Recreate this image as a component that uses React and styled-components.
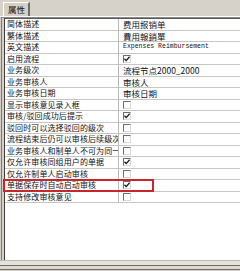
import React from "react";
import styled, { createGlobalStyle } from "styled-components";

const rows = [
  { label: "简体描述", value: "费用报销单" },
  { label: "繁体描述", value: "費用報銷單" },
  { label: "英文描述", value: "Expenses Reimbursement", latin: true },
  { label: "启用流程", check: true },
  { label: "业务级次", value: "流程节点2000_2000" },
  { label: "业务审核人", value: "审核人" },
  { label: "业务审核日期", value: "审核日期" },
  { label: "显示审核意见录入框", check: false },
  { label: "审核/驳回成功后提示", check: true },
  { label: "驳回时可以选择驳回的级次", check: false },
  { label: "流程结束后仍可以审核后续级次", check: false },
  { label: "业务审核人和制单人不可为同一人", check: false },
  { label: "仅允许审核同组用户的单据", check: true },
  { label: "仅允许制单人启动审核", check: false },
  { label: "单据保存时自动启动审核", check: true, marked: true },
  { label: "支持修改审核意见", check: false },
];

export default function App() {
  return (
    <>
      <GlobalStyle />
      <Frame>
        <TabBar>
          <Tab>属性</Tab>
        </TabBar>
        <Body>
          <PropGrid>
            {rows.map((r) => (
              <PropRow key={r.label} $marked={r.marked}>
                <LabelCell>{r.label}</LabelCell>
                <ValueCell $latin={r.latin}>
                  {r.check === undefined ? r.value : <CheckBox checked={r.check} />}
                </ValueCell>
              </PropRow>
            ))}
          </PropGrid>
        </Body>
        <BottomBar />
      </Frame>
    </>
  );
}

function CheckBox({ checked }) {
  return (
    <Box>
      {checked && (
        <svg width="6" height="6" viewBox="0 0 6 6">
          <polyline points="0.5,2.8 2.2,4.6 5.6,0.8" fill="none" stroke="#111" strokeWidth="1.3" />
        </svg>
      )}
    </Box>
  );
}

const GlobalStyle = createGlobalStyle`
  body {
    margin: 0;
    background: #d4d0c8;
  }
`;

const Frame = styled.div`
  width: 240px;
  height: 271px;
  display: flex;
  flex-direction: column;
  overflow: hidden;
  background: #d4d0c8;
  font-family: "Noto Sans CJK SC", "Noto Sans", sans-serif;
`;

const TabBar = styled.div`
  height: 16px;
  display: flex;
  align-items: flex-end;
  padding-left: 3px;
  border-bottom: 1px solid #ffffff;
  background: #d6d2ca;
`;

const Tab = styled.div`
  width: 27px;
  height: 14px;
  box-sizing: border-box;
  display: flex;
  align-items: center;
  border-top: 1px solid #ffffff;
  border-left: 1px solid #ffffff;
  border-right: 2px solid #6f6d68;
  background: #d4d0c8;
  font-size: 8.5px;
  line-height: 1;
  color: #111;
  padding-left: 4px;
  white-space: nowrap;
`;

const Body = styled.div`
  flex: 1;
  display: flex;
  margin-left: 1px;
  border-left: 1px solid #7c7a76;
  border-top: 1px solid #8a8884;
  padding-left: 2px;
  background: #d4d0c8;
`;

const PropGrid = styled.div`
  flex: 1;
  background: #ffffff;
  border-left: 1px solid #3f3e3c;
  border-top: 1px solid #5a5955;
`;

const PropRow = styled.div`
  position: relative;
  display: grid;
  grid-template-columns: 114px 1fr;
  height: 11.5px;
  &::after {
    content: "";
    display: ${(p) => (p.$marked ? "block" : "none")};
    position: absolute;
    left: -2px;
    top: -1px;
    width: 151px;
    height: 13px;
    box-sizing: border-box;
    border: 2px solid #c9262c;
  }
`;

const LabelCell = styled.div`
  display: flex;
  align-items: center;
  border-right: 1px solid #b9b9b9;
  border-bottom: 1px solid #c6c6c6;
  padding-left: 2px;
  font-size: 8px;
  letter-spacing: 0.1px;
  line-height: 1;
  color: #111;
  white-space: nowrap;
  overflow: hidden;
`;

const ValueCell = styled.div`
  display: flex;
  align-items: center;
  border-bottom: 1px solid #c6c6c6;
  padding-left: 4px;
  font-family: ${(p) => (p.$latin ? '"Liberation Mono", monospace' : '"Noto Sans CJK SC", sans-serif')};
  font-size: ${(p) => (p.$latin ? "6.5px" : "8.5px")};
  line-height: 1;
  color: #111;
  white-space: nowrap;
  overflow: hidden;
`;

const Box = styled.span`
  width: 8px;
  height: 8px;
  box-sizing: border-box;
  display: flex;
  align-items: center;
  justify-content: center;
  background: #ffffff;
  border-top: 1px solid #6e6e6e;
  border-left: 1px solid #6e6e6e;
  border-right: 1px solid #d8d8d8;
  border-bottom: 1px solid #d8d8d8;
`;

const BottomBar = styled.div`
  height: 10px;
  background: #d4d0c8;
  border-top: 1px solid #bdbab3;
  box-shadow: inset 0 4px 0 #e6e3dc, inset 0 5px 0 #6f6d68, inset 0 8px 0 #dcd9d2, inset 0 9px 0 #6f6d68;
`;
